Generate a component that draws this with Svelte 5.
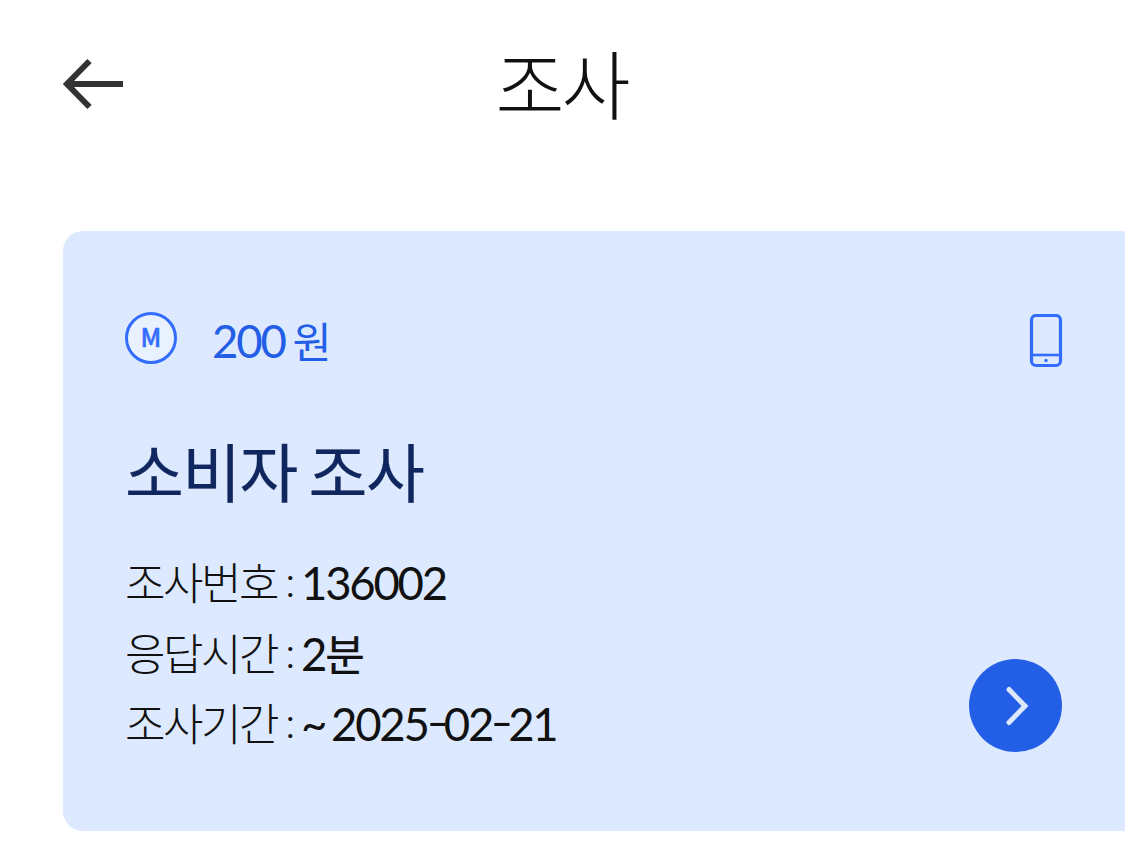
<script lang="ts">
    const survey = {
        reward: 200,
        title: '소비자 조사',
        details: [
            { label: '조사번호', value: '136002', unit: '' },
            { label: '응답시간', value: '2', unit: '분' },
            { label: '조사기간', value: '~ 2025-02-21', unit: '' }
        ]
    };
</script>

<header class="top-bar">
    <button class="back" aria-label="뒤로">
        <svg width="62" height="52" viewBox="0 0 62 52" fill="none" stroke="#333" stroke-width="6">
            <path d="M27.500 3 L5 26 L27.500 49 M5 26 H61" />
        </svg>
    </button>
    <h1>조사</h1>
</header>

<main class="card">
    <div class="card-header">
        <svg class="coin" width="54" height="54" viewBox="0 0 54 54">
            <circle cx="27" cy="27" r="24.500" fill="#e9f1fe" stroke="#326dff" stroke-width="3" />
            <text x="27" y="36" text-anchor="middle">M</text>
        </svg>
        <span class="reward">{survey.reward}<span class="won">원</span></span>
        <svg class="device" width="34" height="54" viewBox="0 0 34 54" fill="none" stroke="#326dff" stroke-width="3.200">
            <rect x="2.500" y="1.500" width="29" height="50" rx="4.500" />
            <path d="M3 41 H31" stroke-width="2.600" />
            <circle cx="17" cy="46.500" r="1.700" fill="#326dff" stroke="none" />
        </svg>
    </div>

    <h2>{survey.title}</h2>

    <div class="card-body">
        <dl>
            {#each survey.details as item}
                <div class="row">
                    <dt>{item.label}<span class="colon">:</span></dt>
                    <dd>
                        {#each item.value.split('-') as part, i}{#if i > 0}<span class="dash">-</span>{/if}{part}{/each}<span class="unit">{item.unit}</span>
                    </dd>
                </div>
            {/each}
        </dl>
        <button class="go" aria-label="참여하기">
            <svg width="93" height="93" viewBox="0 0 93 93" fill="none" stroke="#dce9fd" stroke-width="5" stroke-linecap="round">
                <path d="M40 30.500 L56 47 L40 63.500" />
            </svg>
        </button>
    </div>
</main>

<style>
    :global(body) {
        background: #fff;
        font-family: Lato, "Noto Sans CJK KR", sans-serif;
    }

    h1, h2, dl, dd {
        margin: 0;
    }

    button {
        padding: 0;
        border: 0;
        background: none;
    }

    svg {
        display: block;
    }

    .top-bar {
        display: grid;
        grid-template-columns: 62px 1fr 62px;
        align-items: center;
        height: 168px;
        padding: 0 62px;
        margin-bottom: 63px;
    }

    h1 {
        padding: 2px 2px 0 0;
        font-size: 75px;
        line-height: 100px;
        font-weight: 300;
        text-align: center;
        color: #111;
        letter-spacing: -3px;
    }

    .card {
        box-sizing: border-box;
        height: 600px;
        margin-left: 63px;
        padding: 77px 63px 0 61px;
        border-radius: 20px 0 0 20px;
        background: #dde9fe;
    }

    .card-header {
        display: flex;
        align-items: center;
        height: 60px;
    }

    .coin text {
        font-family: "Noto Sans CJK KR", sans-serif;
        font-size: 25px;
        font-weight: 500;
        fill: #326dff;
        stroke: #326dff;
        stroke-width: 0.5px;
    }

    .reward {
        margin: 2px 0 0 34px;
        font-size: 45.500px;
        letter-spacing: -2.200px;
        color: #235ee7;
    }

    .won {
        margin-left: 8px;
        font-size: 42.500px;
    }

    .device {
        margin: 6px -1px 0 auto;
    }

    h2 {
        margin: 60px 0 0 1px;
        font-size: 64px;
        line-height: 90px;
        font-weight: 400;
        letter-spacing: -1.600px;
        word-spacing: -3px;
        color: #10265f;
        -webkit-text-stroke: 0.2px #10265f;
    }

    .card-body {
        display: flex;
        justify-content: space-between;
        align-items: flex-start;
        margin: 30px 0 0 1px;
    }

    .row {
        display: flex;
        height: 70.500px;
        line-height: 70px;
        color: #111;
    }

    dt {
        width: 176px;
        font-size: 44px;
        font-weight: 300;
        letter-spacing: -2.500px;
    }

    .colon {
        display: inline-block;
        margin-left: 8px;
        transform: translateY(-3px);
    }

    dd {
        font-size: 45.500px;
        letter-spacing: -2.250px;
        word-spacing: -3.500px;
    }

    .dash {
        display: inline-block;
        margin: 0 0.500px 0 1px;
        transform: translateY(-2px) scale(1.350, 0.900);
    }

    .unit {
        font-size: 43px;
        font-weight: 400;
        -webkit-text-stroke: 0.3px #111;
    }

    .go {
        margin-top: 111px;
        border-radius: 50%;
        background: #235ee7;
    }
</style>
